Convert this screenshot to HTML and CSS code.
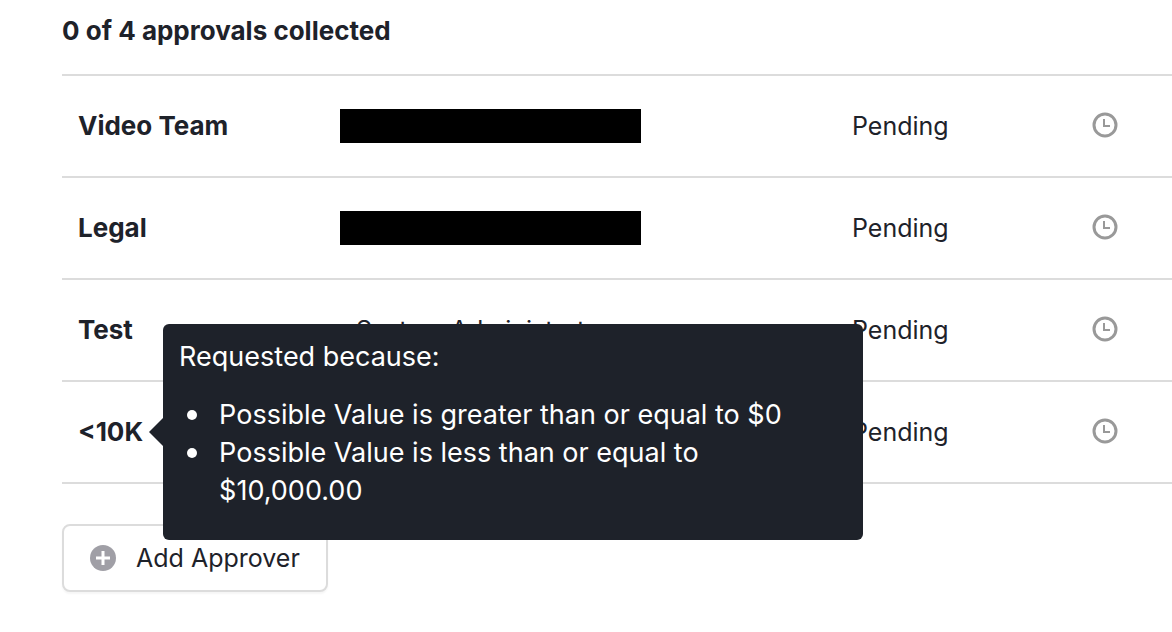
FILE: index.html
```html
<!DOCTYPE html>
<html lang="en">
<head>
<meta charset="utf-8">
<title>Approvals</title>
<link rel="stylesheet" href="styles.css">
</head>
<body>
<svg class="sprite" aria-hidden="true">
  <symbol id="clock" viewBox="0 0 26 26">
    <circle cx="13" cy="13" r="11" fill="none" stroke="currentColor" stroke-width="3"/>
    <path d="M12 7v7h6" fill="none" stroke="currentColor" stroke-width="2"/>
  </symbol>
</svg>
<main class="approvals">
  <h1 class="heading">0 of 4 approvals collected</h1>
  <table class="list">
    <colgroup><col class="col-name"><col><col class="col-status"><col class="col-icon"></colgroup>
    <tbody>
      <tr>
        <th scope="row">Video Team</th>
        <td><span class="redacted"></span></td>
        <td>Pending</td>
        <td><svg class="clock" role="img" aria-label="Pending"><use href="#clock"/></svg></td>
      </tr>
      <tr>
        <th scope="row">Legal</th>
        <td><span class="redacted"></span></td>
        <td>Pending</td>
        <td><svg class="clock" role="img" aria-label="Pending"><use href="#clock"/></svg></td>
      </tr>
      <tr>
        <th scope="row">Test</th>
        <td><span class="person">System Administrator</span></td>
        <td>Pending</td>
        <td><svg class="clock" role="img" aria-label="Pending"><use href="#clock"/></svg></td>
      </tr>
      <tr>
        <th scope="row">
          <span class="anchor">&lt;10K
            <div class="tooltip" role="tooltip">
              <p class="tooltip-title">Requested because:</p>
              <ul class="reasons">
                <li>Possible Value is greater than or equal to $0</li>
                <li>Possible Value is less than or equal to $10,000.00</li>
              </ul>
            </div>
          </span>
        </th>
        <td></td>
        <td>Pending</td>
        <td><svg class="clock" role="img" aria-label="Pending"><use href="#clock"/></svg></td>
      </tr>
    </tbody>
  </table>
  <button class="add" type="button">
    <svg class="plus" viewBox="0 0 26 26" aria-hidden="true">
      <circle cx="13" cy="13" r="13" fill="#a09fa6"/>
      <path d="M13 6v14M6 13h14" stroke="#fff" stroke-width="3"/>
    </svg>
    Add Approver
  </button>
</main>
</body>
</html>
```
FILE: styles.css
```css
* { box-sizing: border-box; }

body {
  margin: 0;
  background: #fff;
  color: #1e222a;
  font-family: Inter, "Liberation Sans", sans-serif;
  font-size: 25px;
  line-height: 38px;
}

.sprite { position: absolute; width: 0; height: 0; }

.approvals { padding: 12px 0 40px 62px; }

.heading {
  margin: 0 0 24px;
  font-size: 26px;
  font-weight: 700;
}

.list {
  width: 100%;
  table-layout: fixed;
  border-collapse: collapse;
  border-bottom: 2px solid #dcdcdc;
}

.col-name { width: 262px; }
.col-status { width: 240px; }
.col-icon { width: 96px; }

.list th,
.list td {
  height: 102px;
  padding: 0 16px;
  border-top: 2px solid #dcdcdc;
  text-align: left;
  vertical-align: middle;
}

.list th {
  font-size: 26px;
  font-weight: 700;
}

.redacted {
  display: block;
  width: 301px;
  height: 34px;
  background: #000;
}

.person { padding-left: 16px; }

.clock {
  display: block;
  width: 26px;
  height: 26px;
  margin-bottom: 2px;
  color: #999;
}

.anchor {
  display: inline-block;
  position: relative;
}

.tooltip {
  position: absolute;
  top: 50%;
  left: calc(100% + 20px);
  z-index: 1;
  width: 700px;
  padding: 14px 16px 30px;
  border-radius: 6px;
  background: #1e222a;
  color: #fff;
  font-size: 27px;
  font-weight: 400;
  transform: translateY(-50%);
}

.tooltip::before {
  content: "";
  position: absolute;
  top: 50%;
  right: 100%;
  border: 14px solid transparent;
  border-left-width: 0;
  border-right-color: #1e222a;
  transform: translateY(-50%);
}

.tooltip-title { margin: 0 0 20px; }

.reasons {
  margin: 0;
  padding: 0 50px 0 40px;
  list-style: none;
}

.reasons li { position: relative; }

.reasons li::before {
  content: "";
  position: absolute;
  top: 14px;
  left: -32px;
  width: 10px;
  height: 10px;
  border-radius: 50%;
  background: #fff;
}

.add {
  display: flex;
  align-items: center;
  gap: 20px;
  margin-top: 40px;
  padding: 13px 26px;
  border: 2px solid #dcdcdc;
  border-radius: 8px;
  background: #fff;
  box-shadow: 0 2px 2px rgba(0, 0, 0, 0.04);
  color: inherit;
  font: inherit;
}

.plus { width: 26px; height: 26px; }
```
